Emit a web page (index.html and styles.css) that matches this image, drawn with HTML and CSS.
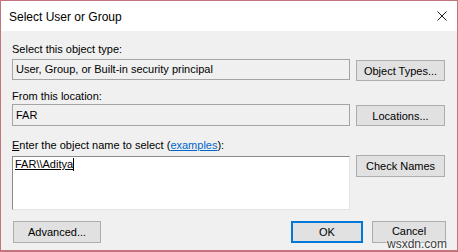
FILE: index.html
```html
<!DOCTYPE html>
<html>
<head>
<meta charset="utf-8">
<link rel="stylesheet" href="styles.css">
</head>
<body>
<div class="window">
  <div class="titlebar">
    <span class="title">Select User or Group</span>
    <svg class="close" width="10" height="10" viewBox="0 0 10 10"><path d="M0.5 0.5 L9.5 9.5 M9.5 0.5 L0.5 9.5" stroke="#1a1a1a" stroke-width="1" fill="none"/></svg>
  </div>
  <div class="content">
    <div class="label l1">Select this object type:</div>
    <div class="row">
      <div class="field">User, Group, or Built-in security principal</div>
      <div class="btn">Object Types...</div>
    </div>
    <div class="label l2">From this location:</div>
    <div class="row">
      <div class="field f2">FAR</div>
      <div class="btn b2">Locations...</div>
    </div>
    <div class="label l3"><u>E</u>nter the object name to select (<a class="link">examples</a>):</div>
    <div class="row">
      <div class="textbox"><span class="entered">FAR\\Aditya</span><span class="caret"></span></div>
      <div class="btn b3">Check Names</div>
    </div>
    <div class="bottom">
      <div class="btn adv">Advanced...</div>
      <div class="spacer"></div>
      <div class="btn ok">OK</div>
      <div class="btn cancel"><span class="cancel-text">Cancel</span></div>
    </div>
  </div>
  <div class="watermark">wsxdn.com</div>
</div>
</body>
</html>
```
FILE: styles.css
```css
html, body {
  margin: 0;
  padding: 0;
  background: #f0f0f0;
}
.window {
  position: relative;
  width: 458px;
  height: 252px;
  box-sizing: border-box;
  border: 1px solid #c4727b;
  border-bottom-width: 2px;
  background: #f0f0f0;
  font-family: "Liberation Sans", Arial, sans-serif;
  font-size: 11px;
  color: #000;
  overflow: hidden;
}
.titlebar {
  height: 30px;
  background: #fff;
  display: flex;
  align-items: center;
  padding: 0 10px 0 8px;
}
.title {
  flex: 1;
  font-size: 12px;
  color: #000;
  padding-top: 1px;
}
.close {
  display: block;
}
.content {
  padding: 11px 11px 0 11px;
}
.label {
  height: 15px;
  line-height: 15px;
  margin-bottom: 2px;
}
.l2 { margin-top: 8px; margin-bottom: 0; }
.l3 { margin-top: 12px; margin-bottom: 3px; }
.link {
  color: #0066cc;
  text-decoration: underline;
}
.row {
  display: flex;
  gap: 6px;
  align-items: flex-start;
}
.field {
  width: 338px;
  height: 21px;
  box-sizing: border-box;
  border: 1px solid #a4a4a4;
  padding: 0 3px;
  line-height: 19px;
  background: #f0f0f0;
}
.f2 { height: 22px; line-height: 20px; }
.btn {
  width: 89px;
  height: 21px;
  box-sizing: border-box;
  border: 1px solid #adadad;
  background: #e1e1e1;
  display: flex;
  align-items: center;
  justify-content: center;
  margin-top: 1px;
}
.textbox {
  width: 338px;
  height: 54px;
  box-sizing: border-box;
  background: #fff;
  border: 1px solid;
  border-color: #8a8a8a #e3e3e3 #e3e3e3 #8a8a8a;
  padding: 1px 2px;
  line-height: 13px;
  display: flex;
  align-items: flex-start;
}
.entered {
  text-decoration: underline;
}
.caret {
  display: inline-block;
  width: 1px;
  height: 13px;
  background: #000;
}
.b3 { margin-top: -1px; height: 22px; }
.bottom {
  display: flex;
  margin-top: 11px;
  gap: 9px;
}
.bottom .btn { margin-top: 0; height: 22px; }
.adv { width: 88px; margin-left: 1px; }
.spacer { flex: 1; }
.ok {
  width: 72px;
  border: 2px solid #0078d7;
}
.cancel {
  width: 74px;
  align-items: flex-start;
}
.cancel-text {
  line-height: 12px;
  margin-top: 3px;
}
.watermark {
  position: absolute;
  left: 386px;
  top: 237px;
  font-size: 12px;
  line-height: 12px;
  color: #3a3a3a;
  text-shadow: 0 0 2px #fff, 0 0 2px #fff, 0 0 1px #fff;
}
```
